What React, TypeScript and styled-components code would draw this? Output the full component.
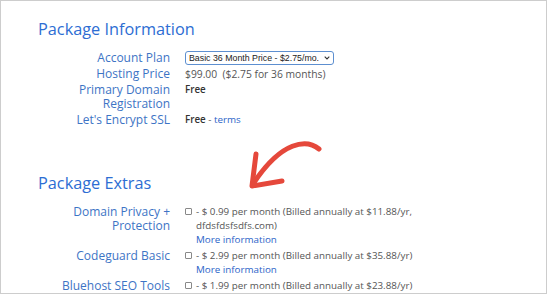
import React from "react";
import styled, { createGlobalStyle } from "styled-components";

const Global = createGlobalStyle`
  html, body { margin: 0; padding: 0; background: #ffffff; }
  body { font-family: "Open Sans", "Liberation Sans", sans-serif; }
`;

const Frame = styled.div`
  position: relative;
  box-sizing: border-box;
  width: 547px;
  height: 294px;
  border: 1px solid #cdcdcd;
  padding: 17px 0 0 37px;
  overflow: hidden;
  background: #fff;
`;

const Heading = styled.h2<{ $gap: number }>`
  margin: 0 0 ${(p) => p.$gap}px 0;
  font-family: "Open Sans", sans-serif;
  font-weight: 400;
  font-size: 16.3px;
  line-height: 22px;
  color: #2d6dd3;
`;

const Section = styled.section<{ $after: number }>`
  margin-bottom: ${(p) => p.$after}px;
`;

const Rows = styled.div<{ $gap: number }>`
  display: grid;
  grid-template-columns: 132px auto;
  column-gap: 15px;
  row-gap: ${(p) => p.$gap}px;
  align-items: start;
`;

const Label = styled.div`
  text-align: right;
  font-size: 12px;
  line-height: 14px;
  color: #3d74c5;
`;

const Value = styled.div<{ $size?: number }>`
  font-size: ${(p) => p.$size ?? 9.8}px;
  line-height: 14px;
  color: #555;
`;

const Strong = styled.span`
  font-weight: 600;
  color: #333;
`;

const Link = styled.a`
  color: #2b63c8;
  text-decoration: none;
`;

const SelectWrap = styled.div`
  position: relative;
  width: 149px;
  height: 14px;
`;

const Select = styled.select`
  display: block;
  appearance: none;
  box-sizing: border-box;
  width: 149px;
  height: 14px;
  margin: 0;
  padding: 0 10px 0 3px;
  border: 1px solid #5d8fd0;
  border-radius: 3px;
  background: #fff;
  font-family: "Liberation Sans", Arial, sans-serif;
  font-size: 8.8px;
  line-height: 12px;
  color: #222;
  outline: none;
`;

const Chevron = styled.svg`
  position: absolute;
  right: 4px;
  top: 5px;
  width: 6px;
  height: 4px;
  pointer-events: none;
`;

const Extra = styled.div`
  display: flex;
  align-items: flex-start;
  gap: 4px;
`;

const Box = styled.span`
  flex: none;
  box-sizing: border-box;
  width: 7px;
  height: 7px;
  margin-top: 3px;
  border: 1px solid #888;
  border-radius: 1px;
  background: #fff;
`;

const ExtraText = styled.div`
  max-width: 222px;
  font-size: 9.8px;
  line-height: 13.8px;
  color: #555;
`;

const Arrow = styled.svg`
  position: absolute;
  left: 0;
  top: 0;
  width: 547px;
  height: 294px;
  pointer-events: none;
`;

type ExtraRow = { label: string[]; price: string; billed: string; info?: boolean };

const extras: ExtraRow[] = [
  {
    label: ["Domain Privacy +", "Protection"],
    price: "- $ 0.99 per month",
    billed: "(Billed annually at $11.88/yr, dfdsfdsfsdfs.com)",
    info: true,
  },
  {
    label: ["Codeguard Basic"],
    price: "- $ 2.99 per month",
    billed: "(Billed annually at $35.88/yr)",
    info: true,
  },
  {
    label: ["Bluehost SEO Tools", "Start"],
    price: "- $ 1.99 per month",
    billed: "(Billed annually at $23.88/yr)",
    info: true,
  },
];

export default function App() {
  return (
    <>
      <Global />
      <Frame>
        <Section $after={45}>
          <Heading $gap={11}>Package Information</Heading>
          <Rows $gap={2}>
            <Label>Account Plan</Label>
            <SelectWrap>
              <Select defaultValue="36">
                <option value="36">Basic 36 Month Price - $2.75/mo.</option>
              </Select>
              <Chevron viewBox="0 0 6 4">
                <path d="M0.7 0.7 L3 3 L5.3 0.7" fill="none" stroke="#333" strokeWidth="1.1" />
              </Chevron>
            </SelectWrap>
            <Label>Hosting Price</Label>
            <Value $size={10.3}>$99.00 &nbsp;($2.75 for 36 months)</Value>
            <Label>
              Primary Domain
              <br />
              Registration
            </Label>
            <Value>
              <Strong>Free</Strong>
            </Value>
            <Label>Let's Encrypt SSL</Label>
            <Value>
              <Strong>Free</Strong> - <Link href="#">terms</Link>
            </Value>
          </Rows>
        </Section>
        <Section $after={0}>
          <Heading $gap={11}>Package Extras</Heading>
          <Rows $gap={2.5}>
            {extras.map((e) => (
              <React.Fragment key={e.price}>
                <Label>
                  {e.label.map((l, i) => (
                    <React.Fragment key={l}>
                      {i > 0 && <br />}
                      {l}
                    </React.Fragment>
                  ))}
                </Label>
                <Extra>
                  <Box />
                  <ExtraText>
                    {e.price} {e.billed}
                    {e.info && (
                      <>
                        <br />
                        <Link href="#">More information</Link>
                      </>
                    )}
                  </ExtraText>
                </Extra>
              </React.Fragment>
            ))}
          </Rows>
        </Section>
        <Arrow viewBox="0 0 547 294">
          <g fill="none" stroke="#e5483b" strokeWidth="5" strokeLinecap="round" strokeLinejoin="round">
            <path d="M318 148 C 306 138, 281 139, 252 183" />
            <path d="M255 153 L251 185 L281 180" />
          </g>
        </Arrow>
      </Frame>
    </>
  );
}
